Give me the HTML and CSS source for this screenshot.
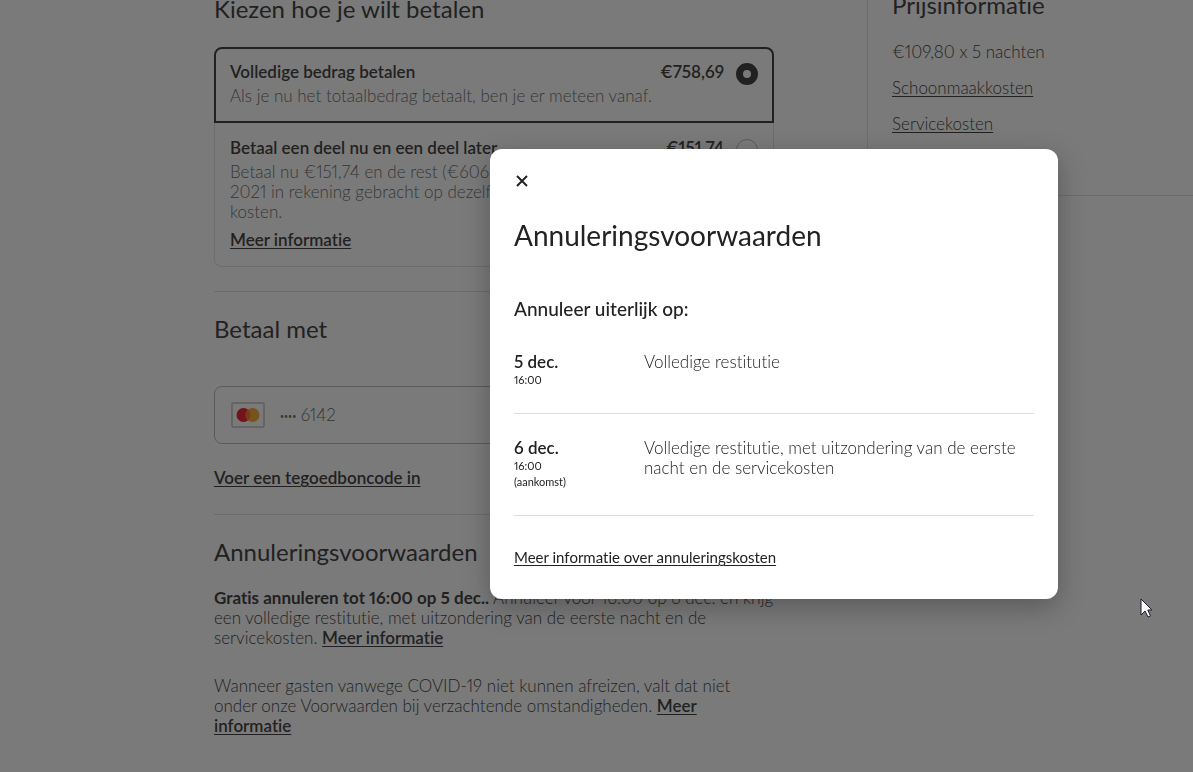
FILE: index.html
```html
<!DOCTYPE html>
<html lang="nl">
<head>
  <meta charset="UTF-8">
  <meta name="viewport" content="width=device-width, initial-scale=1">
  <title>Bevestigen en betalen</title>
  <link rel="stylesheet" href="styles.css">
</head>
<body>

<div class="page">
  <main class="checkout">
    <section class="pay-options">
      <h2>Kiezen hoe je wilt betalen</h2>
      <div class="option selected">
        <div class="option-head">
          <label for="pay-full">Volledige bedrag betalen</label>
          <span class="amount">€758,69</span>
          <input type="radio" name="pay" id="pay-full" checked>
        </div>
        <p>Als je nu het totaalbedrag betaalt, ben je er meteen vanaf.</p>
      </div>
      <div class="option">
        <div class="option-head">
          <label for="pay-part">Betaal een deel nu en een deel later</label>
          <span class="amount">€151,74</span>
          <input type="radio" name="pay" id="pay-part">
        </div>
        <p>Betaal nu €151,74 en de rest (€606,95) wordt op<br>2021 in rekening gebracht op dezelfde kaart. Geen extra<br>kosten.</p>
        <a href="#" class="link">Meer informatie</a>
      </div>
    </section>

    <section class="block">
      <h2>Betaal met</h2>
      <button type="button" class="card-select">
        <svg width="34" height="26" viewBox="0 0 34 26" aria-hidden="true">
          <rect x="1" y="1" width="32" height="24" rx="1" fill="none" stroke="#bbb" stroke-width="1.5"/>
          <circle cx="12.5" cy="13" r="7" fill="#eb001b"/>
          <circle cx="21.5" cy="13" r="7" fill="#f79e1b"/>
          <path d="M17 7.6a7 7 0 0 1 0 10.8a7 7 0 0 1 0-10.8z" fill="#ff5f00"/>
        </svg>
        <span><span class="dots">••••</span> 6142</span>
      </button>
      <a href="#" class="link">Voer een tegoedboncode in</a>
    </section>

    <section class="block policy">
      <h2>Annuleringsvoorwaarden</h2>
      <p><strong>Gratis annuleren tot 16:00 op 5 dec..</strong> Annuleer voor 16:00 op 6 dec. en krijg<br>een volledige restitutie, met uitzondering van de eerste nacht en de<br>servicekosten. <a href="#" class="link">Meer informatie</a></p>
      <p>Wanneer gasten vanwege COVID-19 niet kunnen afreizen, valt dat niet<br>onder onze Voorwaarden bij verzachtende omstandigheden. <a href="#" class="link">Meer<br>informatie</a></p>
    </section>
  </main>

  <aside class="price">
    <h2>Prijsinformatie</h2>
    <p>€109,80 x 5 nachten</p>
    <a href="#">Schoonmaakkosten</a>
    <a href="#">Servicekosten</a>
  </aside>
</div>

<div class="overlay">
  <div class="modal" role="dialog" aria-modal="true" aria-labelledby="modal-title">
    <button type="button" class="close" aria-label="Sluiten">
      <svg width="16" height="16" viewBox="0 0 16 16" aria-hidden="true">
        <path d="M3 3l10 10M13 3L3 13" fill="none" stroke="#222" stroke-width="2"/>
      </svg>
    </button>
    <h1 id="modal-title">Annuleringsvoorwaarden</h1>
    <h3>Annuleer uiterlijk op:</h3>
    <dl>
      <div class="row">
        <dt>5 dec.<small>16:00</small></dt>
        <dd>Volledige restitutie</dd>
      </div>
      <div class="row">
        <dt>6 dec.<small>16:00</small><small>(aankomst)</small></dt>
        <dd>Volledige restitutie, met uitzondering van de eerste nacht en de servicekosten</dd>
      </div>
    </dl>
    <a href="#" class="more">Meer informatie over annuleringskosten</a>
  </div>
</div>

<svg class="cursor" width="13" height="21" viewBox="0 0 13 21" aria-hidden="true">
  <path d="M1 1v16l4-4 3 6 2.500-1-2.700-6H12z" fill="#fff" stroke="#1b1b2b"/>
</svg>

</body>
</html>
```

FILE: styles.css
```css
* {
  box-sizing: border-box;
}
body {
  margin: 0;
  height: 100vh;
  overflow: hidden;
  background: #fff;
  color: #222;
  font-family: Lato, "Liberation Sans", sans-serif;
  font-size: 17px;
  font-weight: 300;
  line-height: 20px;
  font-variant-ligatures: none;
  font-variant-numeric: proportional-nums;
}
h1, h2, h3, p, dl, dd {
  margin: 0;
}
a {
  color: inherit;
  text-decoration-thickness: 1px;
  text-underline-offset: 2px;
}
button {
  font: inherit;
  color: inherit;
}
strong {
  font-weight: 700;
}

/* page is scrolled a little under the top edge */
.page {
  display: flex;
  align-items: flex-start;
  margin-top: -8px;
  padding-left: 214px;
}
.checkout {
  flex: 0 1 560px;
  margin-right: 93px;
  padding-top: 4px;
}
h2 {
  font-size: 24px;
  line-height: 26px;
  font-weight: 400;
}
.link {
  font-weight: 600;
}
.pay-options h2 {
  margin-bottom: 25px;
}
.option {
  padding: 15px 15px 16px;
  border: 1px solid #ddd;
  border-top: 0;
  border-radius: 0 0 8px 8px;
}
.option.selected {
  padding: 13px 14px 15px;
  border: 2px solid #222;
  border-radius: 8px 8px 0 0;
}
.option-head {
  display: flex;
  gap: 12px;
  height: 20px;
  margin-bottom: 4px;
  font-weight: 600;
}
.option-head label {
  flex: 1;
}
.option p {
  color: #555;
}
.option .link {
  display: inline-block;
  margin-top: 8px;
}
input[type="radio"] {
  appearance: none;
  width: 22px;
  height: 22px;
  margin: 1px 0 0;
  border: 1px solid #b0b0b0;
  border-radius: 50%;
}
input[type="radio"]:checked {
  border: 7px solid #222;
}

.block {
  margin-top: 24px;
  padding-top: 24px;
  border-top: 1px solid #ddd;
}
.card-select {
  display: flex;
  align-items: center;
  gap: 15px;
  width: 100%;
  height: 58px;
  margin: 44px 0 24px;
  padding: 0 16px;
  border: 1px solid #b0b0b0;
  border-radius: 8px;
  background: none;
  color: #555;
}
.dots {
  font-size: 7px;
  font-weight: 400;
  vertical-align: 2px;
}
.policy {
  margin-top: 26px;
}
.policy p {
  margin-top: 23px;
  white-space: nowrap;
}
.policy p + p {
  margin-top: 28px;
}

.price {
  flex: 1;
  display: flex;
  flex-direction: column;
  align-items: flex-start;
  gap: 16px;
  padding: 0 24px 61px;
  border-left: 1px solid #ddd;
  border-bottom: 1px solid #ddd;
}
.price h2 {
  margin-bottom: 8px;
}

.overlay {
  position: fixed;
  inset: 0;
  display: flex;
  align-items: center;
  justify-content: flex-end;
  padding: 0 135px 24px 24px;
  background: rgba(34, 34, 34, 0.6);
}
.modal {
  width: 100%;
  max-width: 568px;
  padding: 24px 24px 32px;
  border-radius: 12px;
  background: #fff;
  box-shadow: 0 8px 28px rgba(0, 0, 0, 0.28);
}
.close {
  display: block;
  padding: 0;
  border: 0;
  background: none;
}
.close svg {
  display: block;
}
.modal h1 {
  margin-top: 31px;
  font-size: 28px;
  line-height: 30px;
  font-weight: 400;
}
.modal h3 {
  margin-top: 47px;
  font-size: 19px;
  line-height: 24px;
  font-weight: 500;
}
.modal dl {
  margin: 7px 0 31px;
}
.row {
  display: flex;
  padding: 24px 0 25px;
  border-bottom: 1px solid #ddd;
}
dt {
  flex: 0 0 130px;
  font-weight: 600;
}
dt small {
  display: block;
  font-size: 11px;
  line-height: 16px;
  font-weight: 400;
}
.more {
  font-size: 15px;
  font-weight: 400;
}

.cursor {
  position: fixed;
  left: 1140px;
  top: 598px;
}
```
